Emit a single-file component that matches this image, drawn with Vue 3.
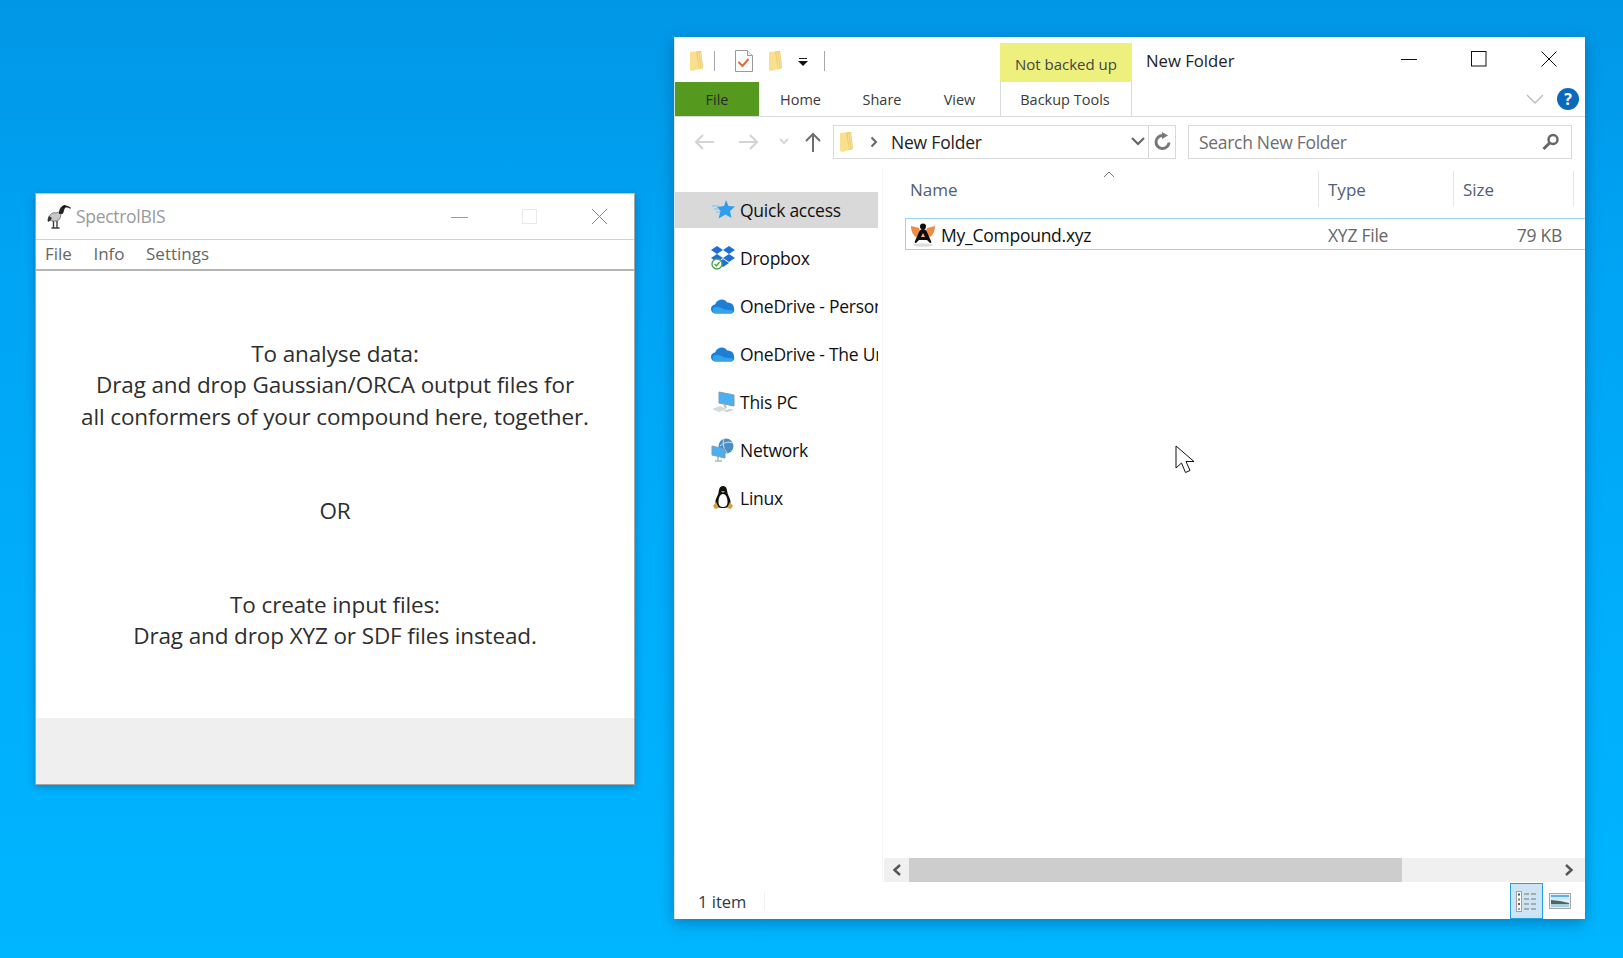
<script setup>
const navItems = [
  { label: 'Quick access', icon: 'star', active: true },
  { label: 'Dropbox', icon: 'dropbox' },
  { label: 'OneDrive - Personal', icon: 'cloud' },
  { label: 'OneDrive - The University', icon: 'cloud' },
  { label: 'This PC', icon: 'pc' },
  { label: 'Network', icon: 'net' },
  { label: 'Linux', icon: 'tux' }
]
const tabs = [
  { label: 'Home', w: 83 },
  { label: 'Share', w: 80 },
  { label: 'View', w: 75 }
]
</script>

<template>
  <div class="desktop">
    <section class="spectro">
      <header class="sp-title">
        <svg class="ibis" width="26" height="26" viewBox="0 0 26 26">
          <path d="M3 14c1-3 4-5 7-4l3-1 2 1c0 3-1 7-4 8H6c-2 0-3-2-3-4z" fill="#c9c9c9" stroke="#666" stroke-width=".8"/>
          <path d="M3 13c-1 2-2 4-1 6 2-1 3-2 4-4z" fill="#333"/>
          <path d="M13 11c0-4 1-7 4-8 3-1 6 0 8 2l-.6.8c-2-1-4-1.600-5-1-1 .600-1.400 3-2.400 6z" fill="#222"/>
          <path d="M16 3l3-1 1 1-3 2z" fill="#111"/>
          <path d="M7.500 18v7M11 18v7M5.500 25h4M9.500 25h4" stroke="#3d3d3d" stroke-width="1.400" fill="none"/>
        </svg>
        <span class="sp-name">SpectrolBIS</span>
        <svg class="sp-ctl" width="17" height="17" viewBox="0 0 17 17"><path d="M0 9.500h17" stroke="#9a9a9a"/></svg>
        <svg class="sp-ctl" width="17" height="17" viewBox="0 0 17 17"><rect x="1.500" y="1.500" width="14" height="14" fill="none" stroke="#e9e9e9"/></svg>
        <svg class="sp-ctl" width="17" height="17" viewBox="0 0 17 17"><path d="M1 1l15 15M16 1L1 16" stroke="#888" fill="none"/></svg>
      </header>
      <nav class="sp-menu">
        <span>File</span><span>Info</span><span>Settings</span>
      </nav>
      <main class="sp-body">
        <p>To analyse data:<br>Drag and drop Gaussian/ORCA output files for<br>all conformers of your compound here, together.</p>
        <p class="or">OR</p>
        <p>To create input files:<br>Drag and drop XYZ or SDF files instead.</p>
      </main>
      <footer class="sp-foot"></footer>
    </section>

    <section class="explorer">
      <header class="ex-title">
        <div class="qat">
          <svg class="fold1" width="16" height="22" viewBox="0 0 16 22"><path d="M1 2l11-1 2 17-11 3-2-1z" fill="#f8e08e"/><path d="M7 1.500l5-.5 2 17-4 1z" fill="#eccb6e"/><path d="M9 2l2 16M11 2l2 16" stroke="#f8e4a4"/></svg>
          <i class="qsep"></i>
          <svg class="doc" width="18" height="22" viewBox="0 0 18 22"><path d="M.5.500h12l5 5v16H.5z" fill="#fff" stroke="#9a9a9a"/><path d="M12.500.500v5h5" fill="#eee" stroke="#9a9a9a"/><path d="M3.500 12l4 4 6-7" fill="none" stroke="#e0693a" stroke-width="2"/></svg>
          <svg class="fold2" width="16" height="22" viewBox="0 0 16 22"><path d="M1 2l11-1 2 17-11 3-2-1z" fill="#f8e08e"/><path d="M7 1.500l5-.5 2 17-4 1z" fill="#eccb6e"/><path d="M9 2l2 16M11 2l2 16" stroke="#f8e4a4"/></svg>
          <svg class="drop" width="10" height="9" viewBox="0 0 10 9"><path d="M1 .500h8" stroke="#222"/><path d="M0 3h10L5 8z" fill="#111"/></svg>
          <i class="qsep q2"></i>
        </div>
        <div class="ctx-label">Not backed up</div>
        <div class="ex-name">New Folder</div>
        <div class="ctl">
          <svg width="16" height="16" viewBox="0 0 16 16"><path d="M0 8.500h16" stroke="#111"/></svg>
          <svg width="16" height="16" viewBox="0 0 16 16"><rect x=".5" y=".5" width="14.500" height="14.500" fill="none" stroke="#111"/></svg>
          <svg width="16" height="16" viewBox="0 0 16 16"><path d="M.5.500l15 15M15.500.500l-15 15" stroke="#111" fill="none"/></svg>
        </div>
      </header>

      <div class="ribbon">
        <div class="tab-file">File</div>
        <div v-for="t in tabs" :key="t.label" class="tab" :style="{ width: t.w + 'px' }">{{ t.label }}</div>
        <div class="tab-ctx">Backup Tools</div>
        <div class="rb-right">
          <svg width="18" height="10" viewBox="0 0 18 10"><path d="M1 1l8 8 8-8" fill="none" stroke="#b9bcc0" stroke-width="1.400"/></svg>
          <span class="help">?</span>
        </div>
      </div>

      <div class="addr-row">
        <svg class="a-back" width="22" height="18" viewBox="0 0 22 18"><path d="M21 9H3M10 2L3 9l7 7" fill="none" stroke="#d4d4d4" stroke-width="2.200"/></svg>
        <svg class="a-fwd" width="22" height="18" viewBox="0 0 22 18"><path d="M1 9h18M12 2l7 7-7 7" fill="none" stroke="#d4d4d4" stroke-width="2.200"/></svg>
        <svg class="a-down" width="10" height="7" viewBox="0 0 10 7"><path d="M1 1l4 4 4-4" fill="none" stroke="#d8d8d8" stroke-width="2"/></svg>
        <svg class="a-up" width="18" height="22" viewBox="0 0 18 22"><path d="M9 21V3M2 10l7-7 7 7" fill="none" stroke="#6e6e6e" stroke-width="2"/></svg>
        <div class="addr">
          <svg width="16" height="22" viewBox="0 0 16 22"><path d="M1 2l11-1 2 17-11 3-2-1z" fill="#f8e08e"/><path d="M7 1.500l5-.5 2 17-4 1z" fill="#eccb6e"/><path d="M9 2l2 16M11 2l2 16" stroke="#f8e4a4"/></svg>
          <svg class="crumb" width="8" height="12" viewBox="0 0 8 12"><path d="M1.500 1.500L6 6l-4.500 4.500" fill="none" stroke="#666" stroke-width="2"/></svg>
          <span class="addr-text">New Folder</span>
          <svg class="addr-drop" width="14" height="9" viewBox="0 0 14 9"><path d="M1 1l6 6 6-6" fill="none" stroke="#666" stroke-width="2.200"/></svg>
          <span class="refresh">
            <svg width="18" height="19" viewBox="0 0 18 19"><path d="M15 10.500a6.500 6.500 0 1 1-6-7" fill="none" stroke="#787878" stroke-width="3"/><path d="M8 0l6 3.500-6 3.500z" fill="#787878"/></svg>
          </span>
        </div>
        <div class="search">
          <span>Search New Folder</span>
          <svg width="18" height="18" viewBox="0 0 18 18"><circle cx="11" cy="6.500" r="4.500" fill="none" stroke="#666" stroke-width="2.400"/><path d="M7.500 10L1.500 16" stroke="#666" stroke-width="3"/></svg>
        </div>
      </div>

      <div class="ex-body">
        <aside class="nav">
          <div v-for="n in navItems" :key="n.label" class="nav-item" :class="{ active: n.active }">
            <span class="nav-ico">
              <svg v-if="n.icon === 'star'" width="24" height="22" viewBox="0 0 24 22">
                <path d="M15 1l2.500 6 6.500.5-5 4.500 1.500 7-6-3.500-7 4 2-7.500L6 8l7-1z" fill="#2f9fec"/>
                <path d="M1 7h7M3 10h5M5 13h4" stroke="#8fcbf4" stroke-width="1.300"/>
              </svg>
              <svg v-else-if="n.icon === 'dropbox'" width="24" height="24" viewBox="0 0 24 24">
                <path d="M6 0l6 4-6 4-6-4zM18 0l6 4-6 4-6-4zM6 8l6 4-6 4-6-4zM18 8l6 4-6 4-6-4zM12 13l6 4-6 4-6-4z" fill="#1d6fd6"/>
                <circle cx="6" cy="18" r="5" fill="#fff" stroke="#4ba34b" stroke-width="1.400"/>
                <path d="M3.500 18l2 2 3-4" fill="none" stroke="#4ba34b" stroke-width="1.400"/>
              </svg>
              <svg v-else-if="n.icon === 'cloud'" width="24" height="16" viewBox="0 0 24 16">
                <path d="M5 15.500a4.500 4.500 0 0 1-1-9c2-5 9-7 12-2 4 0 7 2 7 6 1 3-1 5-3 5z" fill="#1b7fd6"/>
                <path d="M4 15.500c-2-1-3-3-2-5 4-3 8-1 11 1l9 1c0 2-1 3-2 3z" fill="#35a3ea"/>
              </svg>
              <svg v-else-if="n.icon === 'pc'" width="24" height="22" viewBox="0 0 24 22">
                <path d="M8 1l15 3v11L8 12z" fill="#49b0f2" stroke="#7f9db3"/>
                <path d="M13 13l2 4" stroke="#b4bdc4" stroke-width="2"/>
                <path d="M1 18l8-3 7 3-8 3z" fill="#d6dadd"/>
                <path d="M12 20l7-2 4 1-7 2z" fill="#c8ced2"/>
              </svg>
              <svg v-else-if="n.icon === 'net'" width="24" height="24" viewBox="0 0 24 24">
                <circle cx="15" cy="8" r="7.500" fill="#4a8fc4"/>
                <path d="M9 8c3-3 8-5 13-3M13 1c-2 4 0 10 3 14" stroke="#cde6f7" fill="none"/>
                <path d="M1 8l13 3v9L1 17z" fill="#49b0f2" stroke="#7f9db3"/>
                <path d="M7 19v3M4 23h7" stroke="#aab4bc" stroke-width="1.600"/>
              </svg>
              <svg v-else width="22" height="24" viewBox="0 0 22 24">
                <path d="M11 0c4 0 4 4 4.500 7 .5 3 3 5 3 9 0 4-3 6-7.500 6S3.500 20 3.500 16c0-4 2.500-6 3-9S7 0 11 0z" fill="#111"/>
                <path d="M11 8c3 0 4.500 4 4.500 8s-2 5-4.500 5-4.500-1-4.500-5S8 8 11 8z" fill="#fff"/>
                <path d="M9 5h4l-2 2z" fill="#e0a33a"/>
                <path d="M1 20l3-4 3 6-4 1zM21 20l-3-4-3 6 4 1z" fill="#d9a040"/>
              </svg>
            </span>
            <span class="nav-text">{{ n.label }}</span>
          </div>
        </aside>

        <div class="pane">
          <div class="cols">
            <div class="col name">Name
              <svg class="sort" width="12" height="7" viewBox="0 0 12 7"><path d="M1 6l5-5 5 5" fill="none" stroke="#777"/></svg>
            </div>
            <div class="col type">Type</div>
            <div class="col size">Size</div>
          </div>
          <div class="file-row">
            <svg class="avo" width="26" height="24" viewBox="0 0 26 24">
              <ellipse cx="13" cy="22" rx="10" ry="1.800" fill="#ddd"/>
              <path d="M1 3l8 2 2 6-5 3c-3-2-5-6-5-11zM25 3l-8 2-2 6 5 3c3-2 5-6 5-11z" fill="#ef8b45"/>
              <path d="M13 6c2 0 3 1 4 3l4 9c1 2-1 3-2 1l-2-2H9l-2 2c-1 2-3 1-2-1l4-9c1-2 2-3 4-3z" fill="#0d0d0d"/>
              <circle cx="13" cy="3.500" r="3" fill="#0d0d0d"/>
              <path d="M11 14h4l-2-4z" fill="#f2b48a"/>
            </svg>
            <span class="fname">My_Compound.xyz</span>
            <span class="ftype">XYZ File</span>
            <span class="fsize">79 KB</span>
          </div>
          <div class="spacer"></div>
          <div class="hscroll">
            <span class="sb-btn">
              <svg width="10" height="12" viewBox="0 0 10 12"><path d="M8 1L2.500 6 8 11" fill="none" stroke="#555" stroke-width="2.400"/></svg>
            </span>
            <span class="sb-thumb"></span>
            <span class="sb-track"></span>
            <span class="sb-btn end">
              <svg width="10" height="12" viewBox="0 0 10 12"><path d="M2 1l5.500 5L2 11" fill="none" stroke="#555" stroke-width="2.400"/></svg>
            </span>
          </div>
        </div>
      </div>

      <footer class="status">
        <span class="count">1 item</span>
        <span class="st-sep"></span>
        <span class="view-btn on">
          <svg width="21" height="21" viewBox="0 0 21 21">
            <rect x=".5" y=".5" width="5" height="20" fill="#fff" stroke="#a0a0a0"/>
            <path d="M2 3.500h2" stroke="#456" stroke-width="2"/><path d="M2 8.500h2" stroke="#6a8a4a" stroke-width="2"/><path d="M2 13h2" stroke="#a0442a" stroke-width="2"/><path d="M2 18h2" stroke="#7ab" stroke-width="2"/>
            <path d="M8 3h5M15 3h5M8 8h5M15 8h5M8 13h5M15 13h5M8 18h5M15 18h5" stroke="#777"/>
          </svg>
        </span>
        <span class="view-btn">
          <svg width="22" height="16" viewBox="0 0 22 16">
            <rect x=".5" y=".5" width="21" height="15" fill="#e4eff6" stroke="#a6a6a6"/>
            <path d="M2 2h18v2H2z" fill="#58b4ee"/>
            <path d="M2 4h18v3H2z" fill="#d4e8f4"/>
            <path d="M2 7l9 1 9 2v1H2z" fill="#4a6a5a"/>
            <path d="M2 11h18v3H2z" fill="#a9cde2"/>
          </svg>
        </span>
      </footer>
    </section>

    <svg class="cursor" width="20" height="29" viewBox="0 0 20 29">
      <path d="M1 1v22l5.500-5 4 9.500 4.500-2-4-9h8z" fill="#fff" stroke="#111" stroke-linejoin="round"/>
    </svg>
  </div>
</template>

<style>
html, body { margin: 0; }
</style>

<style scoped>
.desktop {
  position: relative;
  width: 1623px;
  height: 958px;
  overflow: hidden;
  background: linear-gradient(180deg, #0097e6 0%, #00a5f5 30%, #00aefc 65%, #00b6ff 100%);
  font-family: "Open Sans", "Noto Sans", sans-serif;
}
.spectro {
  position: absolute;
  left: 35px;
  top: 193px;
  width: 600px;
  height: 592px;
  box-sizing: border-box;
  display: flex;
  flex-direction: column;
  background: #fff;
  border: 1px solid #a4a4a4;
  border-top-color: #c8c8c8;
  box-shadow: 0 2px 8px rgba(0, 50, 100, .35);
}
.sp-title {
  height: 46px;
  box-sizing: border-box;
  flex: none;
  display: flex;
  align-items: center;
  padding: 0 0 1px 10px;
  border-bottom: 1px solid #d2d2d2;
}
.ibis { margin-right: 4px; }
.sp-name { font-size: 17.500px; color: #9a9a9a; letter-spacing: -.3px; flex: 1; }
.sp-ctl { margin-right: 53px; }
.sp-ctl:last-child { margin-right: 26px; }
.sp-menu {
  height: 31px;
  box-sizing: border-box;
  flex: none;
  display: flex;
  gap: 21.500px;
  align-items: center;
  padding: 0 0 2px 9px;
  font-size: 17px;
  color: #666;
  border-bottom: 2px solid #b5b5b5;
}
.sp-body {
  flex: 1;
  padding-top: 67px;
  text-align: center;
  font-size: 22.500px;
  line-height: 31.300px;
  color: #2e2e2e;
  letter-spacing: -.12px;
}
.sp-body p { margin: 0; }
.sp-body .or { margin: 63px 0 63px; }
.sp-foot { height: 66px; flex: none; background: #efefef; }

.explorer {
  position: absolute;
  left: 674px;
  top: 37px;
  width: 911px;
  height: 882px;
  box-sizing: border-box;
  background: #fff;
  border-left: 1px solid #d8e6ee;
  display: flex;
  flex-direction: column;
  box-shadow: 0 4px 14px rgba(0, 50, 100, .4);
}
.ex-title {
  height: 45px;
  flex: none;
  display: flex;
  align-items: flex-end;
  position: relative;
}
.qat {
  width: 325px;
  height: 100%;
  display: flex;
  align-items: center;
  padding: 3px 0 0 14px;
  box-sizing: border-box;
}
.qsep { width: 1px; height: 20px; background: #a8a8a8; margin-left: 9px; }
.doc { margin-left: 20px; }
.fold2 { margin-left: 15px; }
.drop { margin-left: 14px; margin-top: 3px; }
.q2 { margin-left: 16px; }
.ctx-label {
  width: 132px;
  height: 39px;
  background: #eef07e;
  color: #444;
  font-size: 15px;
  display: flex;
  align-items: center;
  justify-content: center;
  padding-top: 2px;
  box-sizing: border-box;
}
.ex-name {
  align-self: center;
  margin-left: 14px;
  margin-top: 2px;
  font-size: 16.700px;
  color: #222;
  flex: 1;
}
.ctl { align-self: center; display: flex; gap: 54px; padding-right: 28px; margin-top: -1px; }
.ribbon {
  height: 35px;
  box-sizing: border-box;
  flex: none;
  display: flex;
  align-items: stretch;
  border-bottom: 1px solid #dadbdc;
  font-size: 14.500px;
  color: #3a3a3a;
}
.tab-file {
  width: 84px;
  background: #559a1e;
  color: #2a2a2a;
  display: flex;
  align-items: center;
  justify-content: center;
}
.tab { display: flex; align-items: center; justify-content: center; }
.tab-ctx {
  width: 132px;
  margin-left: 3px;
  box-sizing: border-box;
  display: flex;
  align-items: center;
  justify-content: center;
  padding-right: 2px;
  border-left: 1px solid #dadbdc;
  border-right: 1px solid #dadbdc;
}
.rb-right {
  margin-left: auto;
  display: flex;
  align-items: center;
  gap: 13px;
  padding-right: 6px;
}
.help {
  width: 22px;
  height: 22px;
  border-radius: 50%;
  background: #0a68bd;
  color: #fff;
  font-weight: 700;
  font-size: 16px;
  display: flex;
  align-items: center;
  justify-content: center;
}
.addr-row {
  height: 52px;
  box-sizing: border-box;
  flex: none;
  display: flex;
  align-items: center;
  padding: 0 0 3px 18px;
}
.a-fwd { margin-left: 23px; }
.a-down { margin-left: 19px; }
.a-up { margin-left: 15px; }
.addr {
  margin-left: 11px;
  width: 343px;
  height: 34px;
  box-sizing: border-box;
  border: 1px solid #d9d9d9;
  display: flex;
  align-items: center;
  padding-left: 5px;
}
.crumb { margin-left: 15px; }
.addr-text { margin-left: 13px; font-size: 17.500px; color: #222; flex: 1; letter-spacing: -.2px; }
.addr-drop { margin-right: 3px; }
.refresh {
  width: 27px;
  height: 100%;
  box-sizing: border-box;
  border-left: 1px solid #d9d9d9;
  padding-left: 2px;
  display: flex;
  align-items: center;
  justify-content: center;
}
.search {
  margin-left: 12px;
  width: 384px;
  height: 34px;
  box-sizing: border-box;
  border: 1px solid #d9d9d9;
  display: flex;
  align-items: center;
  justify-content: space-between;
  padding: 0 11px 0 10px;
  font-size: 17.500px;
  color: #6d6d6d;
  letter-spacing: -.3px;
}
.ex-body { height: 713px; flex: none; display: flex; }
.nav {
  width: 208px;
  box-sizing: border-box;
  flex: none;
  padding: 23px 4px 0 0;
  display: flex;
  flex-direction: column;
  gap: 12px;
  border-right: 1px solid #f5f5f5;
}
.nav-item {
  height: 36px;
  display: flex;
  align-items: center;
  overflow: hidden;
  white-space: nowrap;
  font-size: 17.500px;
  letter-spacing: -.25px;
  color: #111;
  padding-left: 34px;
}
.nav-item.active { background: #d9d9d9; }
.nav-ico { width: 28px; flex: none; display: flex; justify-content: center; margin-right: 3px; }
.pane { flex: 1; min-width: 0; display: flex; flex-direction: column; }
.cols { height: 49px; flex: none; display: flex; font-size: 17px; color: #4f6078; }
.col {
  box-sizing: border-box;
  height: 36px;
  display: flex;
  align-items: center;
  padding-left: 9px;
  margin-top: 2px;
  border-right: 1px solid #e6e6e6;
  position: relative;
}
.col.name { width: 436px; padding-left: 27px; }
.col.type { width: 135px; }
.col.size { width: 120px; }
.sort { position: absolute; left: 220px; top: 0; }
.file-row {
  height: 32px;
  box-sizing: border-box;
  flex: none;
  margin-left: 22px;
  border: 1px solid #99d1ff;
  border-right: none;
  display: flex;
  align-items: center;
  padding: 1px 0 0 4px;
  font-size: 17.500px;
  letter-spacing: -.25px;
  color: #111;
}
.avo { margin-right: 5px; }
.fname { width: 387px; }
.ftype { color: #666; width: 140px; }
.fsize { color: #666; width: 94px; text-align: right; }
.spacer { flex: 1; }
.hscroll { height: 24px; flex: none; display: flex; background: #f0f0f0; margin-left: 1px; }
.sb-btn { width: 25px; flex: none; display: flex; align-items: center; justify-content: center; }
.sb-btn.end { width: 29px; padding-right: 4px; box-sizing: border-box; }
.sb-thumb { width: 493px; background: #cdcdcd; }
.sb-track { flex: 1; }
.status {
  height: 37px;
  flex: none;
  box-sizing: border-box;
  display: flex;
  align-items: center;
  padding: 1px 0 0 23px;
  font-size: 16.500px;
  color: #2a3a4a;
}
.count { width: 66px; }
.st-sep { width: 1px; height: 18px; background: #f0f0f0; }
.view-btn {
  box-sizing: border-box;
  width: 33px;
  height: 36px;
  display: flex;
  align-items: center;
  justify-content: center;
}
.view-btn.on {
  margin-left: auto;
  background: #cce4f3;
  border: 1px solid #26a0da;
}
.view-btn:last-child { margin: 0 11px 0 3px; width: 28px; }
.cursor { position: absolute; left: 1175px; top: 445px; }
</style>
